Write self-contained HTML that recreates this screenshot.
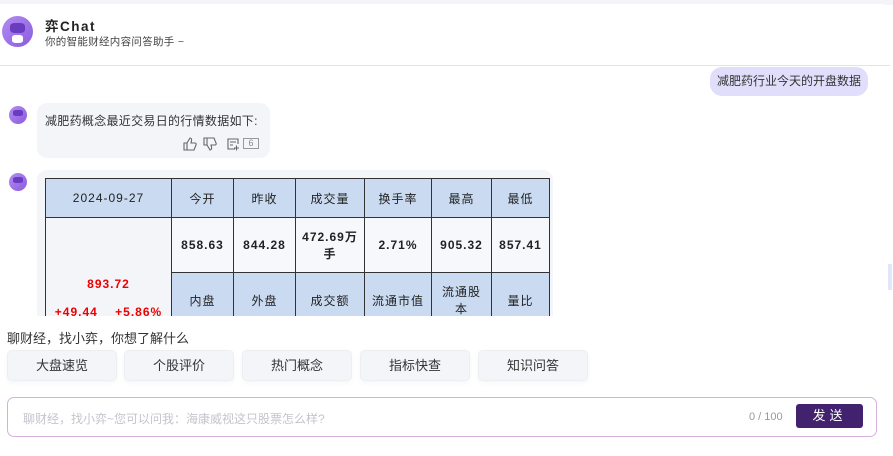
<!DOCTYPE html>
<html><head><meta charset="utf-8"><style>
*{margin:0;padding:0;box-sizing:border-box}
body{width:893px;height:456px;background:#fff;font-family:"Liberation Sans","Noto Sans CJK SC",sans-serif;position:relative;overflow:hidden;color:#333}
.top{position:absolute;left:0;top:0;width:893px;height:5px;background:#f4f5f9}
.panel{position:absolute;left:0;top:4px;width:890px;height:62px;background:#fff;border-bottom:1px solid #e4e4e8;border-top-right-radius:8px}
.av{position:absolute;border-radius:50%;background:linear-gradient(135deg,#b48cf0,#8a5be0)}
.av i{position:absolute;background:#fff;border-radius:30%}
.t{position:absolute;white-space:nowrap}
.clip{position:absolute;left:0;top:66px;width:893px;height:250px;overflow:hidden}
table{border-collapse:collapse;position:absolute;left:45px;top:112px;font-size:12px;letter-spacing:1px}
td{border:1px solid #333;text-align:center;color:#222}
.h td{background:#c9daf1}
.btn{position:absolute;top:350px;height:31px;width:110px;background:#f4f5f9;border:1px solid #eceef2;border-radius:5px;font-size:13px;text-align:center;line-height:30px;color:#333;box-shadow:0 2px 6px rgba(0,0,0,.04)}
</style></head><body>
<div class="top"></div>
<div class="panel"></div>
<div class="av" style="left:2px;top:16px;width:31px;height:31px"><i style="left:8px;top:7px;width:15px;height:10px;background:#6a3dc0"></i><i style="left:10px;top:19px;width:11px;height:8px"></i></div>
<div class="t" style="left:45px;top:15px;font-size:13.5px;font-weight:bold;letter-spacing:1.5px;color:#222">弈Chat</div>
<div class="t" style="left:45px;top:34px;font-size:10.5px;color:#444;letter-spacing:.3px">你的智能财经内容问答助手 ~</div>
<div class="clip">
<div class="t" style="left:710px;top:1px;width:158px;height:29px;background:#e0defa;border-radius:12px;font-size:12px;line-height:29px;text-align:center;color:#333">减肥药行业今天的开盘数据</div>
<div class="av" style="left:9px;top:40px;width:18px;height:18px"><i style="left:4px;top:4px;width:10px;height:6px;background:#6a3dc0"></i></div>
<div class="t" style="left:37px;top:37px;width:233px;height:55px;background:#f4f5f9;border-radius:10px"></div>
<div class="t" style="left:45px;top:46px;font-size:12px;color:#333;letter-spacing:.3px">减肥药概念最近交易日的行情数据如下:</div>
<svg class="t" style="left:182px;top:70px" width="80" height="16" viewBox="0 0 80 16" fill="none" stroke="#666" stroke-width="1.1">
<path d="M2 7h3v7H2zM5 7l3-5c1 0 2 1 1.5 3L9 7h4c1 0 1.5 1 1 2l-2 5H5"/>
<path d="M22 9h3V2h-3zM25 9l3 5c1 0 2-1 1.5-3L29 9h4c1 0 1.5-1 1-2l-2-5h-7"/>
<path d="M53 13h-7V3h10v5M48 6h6M48 9h3M52 12h5M54.5 9.5v5"/>
</svg>
<div class="t" style="left:243px;top:72px;width:16px;height:11px;border:1px solid #999;font-size:9px;line-height:9px;text-align:center;color:#888">6</div>
<div class="av" style="left:9px;top:107px;width:18px;height:18px"><i style="left:4px;top:4px;width:10px;height:6px;background:#6a3dc0"></i></div>
<div class="t" style="left:37px;top:104px;width:516px;height:160px;background:#f4f5f9;border-radius:10px"></div>
<table>
<tr class="h" style="height:39px"><td style="width:126px">2024-09-27</td><td style="width:62px">今开</td><td style="width:62px">昨收</td><td style="width:69px">成交量</td><td style="width:67px">换手率</td><td style="width:60px">最高</td><td style="width:58px">最低</td></tr>
<tr style="height:55px;background:#f7f8fb;font-weight:bold"><td rowspan="2" style="background:#f4f5f9;color:#e00;vertical-align:bottom;padding-bottom:8px;font-weight:bold">893.72<br><br>+49.44&nbsp;&nbsp;&nbsp;&nbsp;+5.86%</td><td>858.63</td><td>844.28</td><td>472.69万<br>手</td><td>2.71%</td><td>905.32</td><td>857.41</td></tr>
<tr class="h" style="height:55px"><td>内盘</td><td>外盘</td><td>成交额</td><td>流通市值</td><td>流通股<br>本</td><td>量比</td></tr>
</table>
</div>
<div class="t" style="left:888px;top:264px;width:4px;height:26px;background:#e2e6fa"></div>
<div class="t" style="left:7px;top:328px;font-size:13px;color:#333">聊财经，找小弈，你想了解什么</div>
<div class="btn" style="left:7px">大盘速览</div>
<div class="btn" style="left:124px">个股评价</div>
<div class="btn" style="left:242px">热门概念</div>
<div class="btn" style="left:360px">指标快查</div>
<div class="btn" style="left:478px">知识问答</div>
<div class="t" style="left:7px;top:397px;width:870px;height:40px;border:1px solid #d6b0dc;border-radius:7px"></div>
<div class="t" style="left:23px;top:410px;font-size:12px;color:#c4c4cc">聊财经，找小弈~您可以问我：海康威视这只股票怎么样?</div>
<div class="t" style="left:749px;top:411px;font-size:11px;color:#999">0 / 100</div>
<div class="t" style="left:796px;top:404px;width:67px;height:24px;background:#42226e;border-radius:3px;color:#fff;font-size:13px;line-height:24px;text-align:center;letter-spacing:4px">发送</div>
</body></html>
